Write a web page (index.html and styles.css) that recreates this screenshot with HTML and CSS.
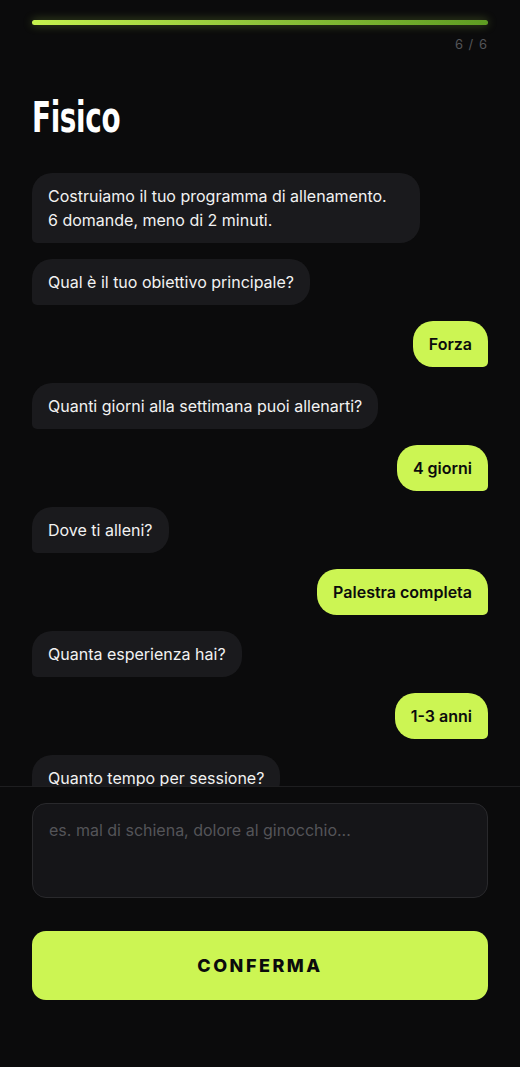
FILE: index.html
```html
<!DOCTYPE html>
<html lang="it">
<head>
    <meta charset="UTF-8">
    <meta name="viewport" content="width=device-width, initial-scale=1.0">
    <title>Fisico</title>
    <link rel="stylesheet" href="styles.css">
</head>
<body>
    <div class="screen">
        <div class="header">
            <div class="progress"><div class="progress-fill"></div></div>
            <div class="step">6 / 6</div>
            <h1>Fisico</h1>
        </div>

        <div class="chat">
            <div class="msg bot intro">Costruiamo il tuo programma di allenamento.<br>6 domande, meno di 2 minuti.</div>
            <div class="msg bot">Qual è il tuo obiettivo principale?</div>
            <div class="msg user">Forza</div>
            <div class="msg bot">Quanti giorni alla settimana puoi allenarti?</div>
            <div class="msg user">4 giorni</div>
            <div class="msg bot">Dove ti alleni?</div>
            <div class="msg user">Palestra completa</div>
            <div class="msg bot">Quanta esperienza hai?</div>
            <div class="msg user">1-3 anni</div>
            <div class="msg bot">Quanto tempo per sessione?</div>
        </div>

        <div class="footer">
            <textarea class="notes" placeholder="es. mal di schiena, dolore al ginocchio..."></textarea>
            <button class="confirm-btn">CONFERMA</button>
        </div>
    </div>
</body>
</html>
```

FILE: styles.css
```css
html, body {
    margin: 0;
    height: 100%;
}

body {
    font-family: Inter, 'Noto Sans', sans-serif;
    background-color: #0b0b0c;
    color: #f2f2f2;
}

.screen {
    display: flex;
    flex-direction: column;
    height: 100vh;
}

.header {
    padding: 20px 32px 0;
}

.progress {
    height: 5px;
    border-radius: 3px;
    background-color: #1c1c1e;
}

.progress-fill {
    height: 100%;
    width: 100%;
    border-radius: 3px;
    background: linear-gradient(90deg, #c6f24e 0%, #8fc43a 50%, #5e9c22 100%);
    box-shadow: 0 0 10px rgba(190, 240, 80, 0.35);
}

.step {
    text-align: right;
    margin-top: 11px;
    font-size: 13px;
    letter-spacing: 1px;
    color: #555558;
}

h1 {
    margin: 44px 0 34px;
    font-family: 'DejaVu Sans Condensed', 'Liberation Sans Narrow', sans-serif;
    font-weight: 700;
    font-size: 43px;
    line-height: 1;
    letter-spacing: -0.5px;
    color: #ffffff;
    transform: scaleX(0.72);
    transform-origin: left center;
}

.chat {
    flex: 1;
    overflow: hidden;
    display: flex;
    flex-direction: column;
    gap: 16px;
    padding: 0 32px;
}

.msg {
    max-width: 85%;
    box-sizing: border-box;
    padding: 11px 16px;
    font-size: 16px;
    line-height: 24px;
    border-radius: 20px;
}

.msg.intro {
    width: 85%;
}

.msg.bot {
    align-self: flex-start;
    background-color: #1a1a1d;
    color: #f2f2f2;
    border-bottom-left-radius: 5px;
}

.msg.user {
    align-self: flex-end;
    background-color: #ccf553;
    color: #0b0b0c;
    font-weight: 600;
    border-bottom-right-radius: 5px;
}

.footer {
    border-top: 1px solid #1e1e20;
    padding: 16px 32px 67px;
    display: flex;
    flex-direction: column;
    gap: 33px;
}

.notes {
    height: 95px;
    box-sizing: border-box;
    padding: 14px 16px;
    border: 1px solid #29292c;
    border-radius: 14px;
    background-color: #151518;
    color: #f2f2f2;
    font-family: inherit;
    font-size: 16px;
    line-height: 24px;
    resize: none;
}

.notes::placeholder {
    color: #545458;
}

.confirm-btn {
    height: 69px;
    border: none;
    border-radius: 14px;
    background-color: #ccf553;
    color: #0b0b0c;
    font-family: inherit;
    font-size: 18px;
    font-weight: 800;
    letter-spacing: 2.5px;
    cursor: pointer;
}
```
